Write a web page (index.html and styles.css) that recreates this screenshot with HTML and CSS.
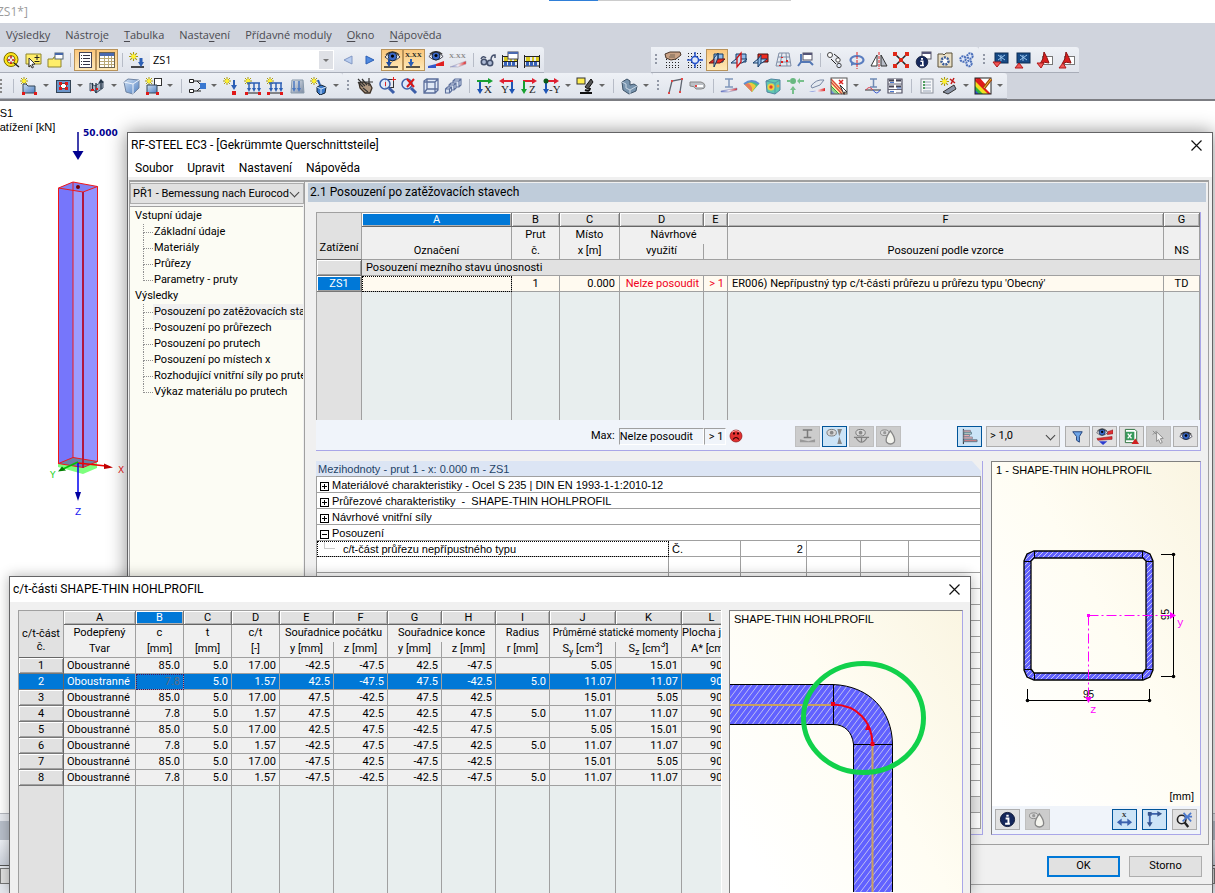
FILE: index.html
```html
<!DOCTYPE html>
<html lang="cs">
<head>
<meta charset="utf-8">
<title>RF-STEEL EC3</title>
<link rel="stylesheet" href="styles.css">
</head>
<body>
<svg class="paints" aria-hidden="true">
  <defs>
    <linearGradient id="gBlue" x1="0" y1="0" x2="1" y2="1"><stop offset="0" stop-color="#cfe0f4"/><stop offset="1" stop-color="#4f7fc0"/></linearGradient>
    <linearGradient id="gGrey" x1="0" y1="0" x2="1" y2="1"><stop offset="0" stop-color="#e4e9f0"/><stop offset="1" stop-color="#7d8ca4"/></linearGradient>
    <linearGradient id="gRB" x1="0" y1="0" x2="1" y2="0"><stop offset="0" stop-color="#4a6ad0"/><stop offset=".5" stop-color="#f4f0f6"/><stop offset="1" stop-color="#e02020"/></linearGradient>
    <pattern id="hatch" width="5" height="5" patternUnits="userSpaceOnUse"><rect width="5" height="5" fill="#6161ff"/><path d="M-1 6L6-1M-1 1L1-1M4 6L6 4" stroke="#c9c9ee" stroke-width="1"/></pattern>
    <pattern id="hatchWide" width="6" height="8" patternUnits="userSpaceOnUse"><rect width="6" height="8" fill="#6161ff"/><path d="M-1 9.300L7-1.300M-1 1.300L1-1.300M5 9.300L7 6.700" stroke="#bdbdf2" stroke-width="1"/></pattern>
  </defs>
</svg>
<svg class="symbols" aria-hidden="true">
  <symbol id="star" viewBox="0 0 8 8"><path d="M4 0v8M0 4h8M1 1l6 6M7 1L1 7" stroke="#a89a10"/><circle cx="4" cy="4" r="2" fill="#fff22e"/></symbol>
  <symbol id="find" viewBox="0 0 18 18"><circle cx="9" cy="8.500" r="7" fill="#ffe61a" stroke="#7a6c00"/><circle cx="9" cy="8.500" r="4" fill="#eceff2" stroke="#7a6c00"/><path d="M9 5v2.500M5.500 9H8M9 13v-2.500M12.500 9H10" stroke="#d01010" stroke-width="1.500"/><path d="M12 12l5 4" stroke="#222" stroke-width="1.500"/></symbol>
  <symbol id="pick" viewBox="0 0 18 18"><path d="M2 3h15v10H9l-4 3V13H2z" fill="#ffee6a" stroke="#8d8430"/><path d="M13 4v5M10.500 6.500h5M10.500 10.500h5" stroke="#222"/><path d="M5 7l6 6-3 .3 1.500 3-1.500.7-1.400-3L5 16z" fill="#fff" stroke="#333"/></symbol>
  <symbol id="tabs" viewBox="0 0 18 18"><path d="M2 8h5l1-2h7v10H2z" fill="#ffee6a" stroke="#8d8430"/><rect x="9" y="2" width="8" height="6" fill="#fff" stroke="#567"/><path d="M9 3h8" stroke="#4466a8" stroke-width="2"/></symbol>
  <symbol id="list" viewBox="0 0 18 18"><rect x="3.500" y="1.500" width="12" height="15" fill="#fff" stroke="#445"/><path d="M7 4.500h7M7 7.500h7M7 10.500h7M7 13.500h7" stroke="#334"/><path d="M5.500 4v10" stroke="#333" stroke-dasharray="1 2"/></symbol>
  <symbol id="table" viewBox="0 0 18 18"><rect x="1.500" y="1.500" width="15" height="15" fill="#fff" stroke="#6b624e"/><rect x="2" y="2" width="14" height="3" fill="#4a69b0"/><path d="M2 7.500h14M2 10.500h14M2 13.500h14M6.500 5v11M10.500 5v11M13.500 5v11" stroke="#b9a878"/></symbol>
  <symbol id="newload" viewBox="0 0 18 18"><use href="#star" x="1" y="1" width="9" height="9"/><path d="M3 16h13" stroke="#111" stroke-width="1.500"/><path d="M13 7v6" stroke="#2c5fb5" stroke-width="3"/><path d="M10 11h6l-3 5z" fill="#2c5fb5"/></symbol>
  <symbol id="prev" viewBox="0 0 18 18"><path d="M13 5v8L5 9z" fill="#b8cdf0" stroke="#8298c4"/></symbol>
  <symbol id="next" viewBox="0 0 18 18"><path d="M5 5v8l8-4z" fill="#4f8ae0" stroke="#2c5fb5"/></symbol>
  <symbol id="eye" viewBox="0 0 18 18"><path d="M1 9.500q8-9 16 0q-8 8-16 0z" fill="#fff" stroke="#334"/><circle cx="9" cy="9" r="4.500" fill="#3a68c8" stroke="#123"/><circle cx="9" cy="8.500" r="1.700" fill="#000"/><path d="M2 7q7-6 14 0" fill="none" stroke="#333" stroke-width="1.300"/></symbol>
  <symbol id="eyeload" viewBox="0 0 18 18"><use href="#eye" x="1" y="-3" width="17" height="17"/><path d="M1 16h14" stroke="#222" stroke-width="1.500"/><path d="M6 8v5" stroke="#1f4da0" stroke-width="2"/><path d="M3 11h6l-3 5z" fill="#1f4da0"/></symbol>
  <symbol id="xxx" viewBox="0 0 18 18"><text x="0" y="6" class="tiny">X.XX</text><path d="M1 16h14" stroke="#222" stroke-width="1.500"/><path d="M6 8v5" stroke="#2c5fb5" stroke-width="2"/><path d="M3 11h6l-3 5z" fill="#2c5fb5"/></symbol>
  <symbol id="eyerb" viewBox="0 0 18 18"><use href="#eye" x="1" y="-3" width="16" height="16"/><path d="M1 17v-2l8-2v4z" fill="#3458c8"/><path d="M9 13l8-3v5H9z" fill="#e02020"/></symbol>
  <symbol id="xxrb" viewBox="0 0 18 18"><text x="0" y="7" class="tiny pale">X.XX</text><path d="M1 16l16-6v3l-8 3z" fill="url(#gRB)" stroke="#b0a8b8" stroke-width=".6"/></symbol>
  <symbol id="glasses" viewBox="0 0 18 18"><circle cx="5" cy="11" r="2.700" fill="#aebbd6" stroke="#44506c" stroke-width="1.600"/><circle cx="11" cy="12" r="2.700" fill="#aebbd6" stroke="#44506c" stroke-width="1.600"/><path d="M2 8q2-4 5-1M12 9q0-5 4-5v3" fill="none" stroke="#44506c" stroke-width="1.500"/></symbol>
  <symbol id="abacus" viewBox="0 0 18 18"><path d="M1.500 4v13M16.500 4v13M1 5.500h16M1 10.500h16M1 15h16" stroke="#222"/><path d="M3 8h4M9 8h2M13 8h3" stroke="#d8ca20" stroke-width="4"/><path d="M3 13h12" stroke="#3560b8" stroke-width="4" stroke-dasharray="3 1"/></symbol>
  <symbol id="abacusw" viewBox="0 0 18 18"><use href="#abacus" width="18" height="18"/><rect x="7" y="1" width="10" height="7" fill="#fff" stroke="#445"/><path d="M7 2h10" stroke="#4a69b0" stroke-width="2"/></symbol>
  <symbol id="handgrid" viewBox="0 0 18 18"><path d="M2 8.500h15M2 11.500h15M2 14.500h15M2 16.500h15" stroke="#222" stroke-dasharray="1 2"/><path d="M1 3l5-2 10 0 1 3-5 4-5 1-5-2z" fill="#c9a184" stroke="#4b372b"/><path d="M6 4l5 0M5 6l6 0" stroke="#765"/></symbol>
  <symbol id="gridx" viewBox="0 0 18 18"><path d="M2 2.500h15M2 5.500h15M2 8.500h15M2 11.500h15M2 14.500h15M2 16.500h15" stroke="#222" stroke-dasharray="1 2"/><path d="M9 1v16M1 9h16" stroke="#2350c8" stroke-width="1.500"/><circle cx="9" cy="9" r="3.500" fill="#dfe9fb" stroke="#2350c8" stroke-width="1.500"/></symbol>
  <symbol id="plane1" viewBox="0 0 18 18"><path d="M6 3h9v8H6z" fill="#8fbbe8" stroke="#153a66"/><path d="M1 12l5-4h11l-5 4z" fill="#ee2c20" stroke="#611"/><path d="M6 7l4-5v5l-4 9z" fill="#b8d5f2" fill-opacity=".8" stroke="#153a66"/><path d="M10 2v6" stroke="#153a66"/></symbol>
  <symbol id="plane2" viewBox="0 0 18 18"><path d="M6 3h10v8H6z" fill="#8fbbe8" stroke="#153a66"/><path d="M1 12l5-4h11l-5 4z" fill="#b8d5f2" stroke="#153a66"/><path d="M7 7l4-5v9l-4 5z" fill="#cfe2f6" stroke="#c11" stroke-width="1.300"/></symbol>
  <symbol id="plane3" viewBox="0 0 18 18"><path d="M6 3h10v8H6z" fill="#ee2c20" stroke="#411"/><path d="M1 12l5-4h9l-5 4z" fill="#b8d5f2" stroke="#153a66"/><path d="M6 8l3-4v8l-3 4z" fill="#8fbbe8" stroke="#153a66"/></symbol>
  <symbol id="mesh" viewBox="0 0 18 18"><path d="M5 2h10l2 13H2zM8 2L6 15M12 2l1 13M4 6h12M3 11h13" fill="none" stroke="#7f8da5"/><path d="M8 6v1M8 10v2M13 9v2M6 14v1" stroke="#d22" stroke-width="2"/></symbol>
  <symbol id="axisw" viewBox="0 0 18 18"><rect x="7" y="2" width="9" height="7" fill="#fff" stroke="#556"/><path d="M7 3h9" stroke="#557" stroke-width="2"/><path d="M5 3v8l-3 4M5 11h9l3 3" fill="none" stroke="#5377b5" stroke-width="2"/></symbol>
  <symbol id="copyc" viewBox="0 0 18 18"><circle cx="4" cy="4" r="2.500" fill="#fff" stroke="#444"/><circle cx="12" cy="9" r="2.200" fill="#fff" stroke="#444"/><circle cx="13" cy="14.500" r="2.200" fill="#dde6f6" stroke="#444"/><path d="M5 8l5 5M8 3l5 4" stroke="#222"/></symbol>
  <symbol id="rotate" viewBox="0 0 18 18"><ellipse cx="9" cy="9" rx="6.500" ry="4" fill="none" stroke="#5b7ec0" stroke-width="2.200"/><path d="M9 1v17" stroke="#e02020" stroke-dasharray="3 1"/><path d="M3 10l0 5 4-2z" fill="#5b7ec0"/></symbol>
  <symbol id="mirror" viewBox="0 0 18 18"><path d="M7 4v11H1z" fill="#fff" stroke="#333"/><path d="M11 4v11h6z" fill="#b8bdc8" stroke="#333"/><path d="M9 1v17" stroke="#e02020" stroke-dasharray="3 1"/></symbol>
  <symbol id="cross" viewBox="0 0 18 18"><path d="M3 3l12 12M15 3L3 15" stroke="#222" stroke-width="1.500"/><path d="M1 1h4v4H1zM13 1h4v4h-4zM1 13h4v4H1zM13 13h4v4h-4zM7 7h4v4H7z" fill="#e02818"/></symbol>
  <symbol id="info" viewBox="0 0 18 18"><circle cx="9" cy="9" r="7.500" fill="#16285c" stroke="#0b1433"/><path d="M9 4v2" stroke="#fff" stroke-width="2.500"/><path d="M7 8h3v5M6.500 13.500h5" stroke="#fff" stroke-width="2" fill="none"/></symbol>
  <symbol id="infow" viewBox="0 0 18 18"><rect x="8" y="1" width="9" height="7" fill="#fff" stroke="#556"/><path d="M8 2h9" stroke="#557" stroke-width="2"/><use href="#info" x="1" y="4" width="14" height="14"/></symbol>
  <symbol id="boxgear" viewBox="0 0 18 18"><path d="M2 3h5l1 1 2-2h6v14H2z" fill="#e9dfc6" stroke="#5a5038"/><circle cx="9" cy="10" r="3.500" fill="#fff" stroke="#3b5c98" stroke-width="2.500" stroke-dasharray="2 1"/></symbol>
  <symbol id="gears" viewBox="0 0 18 18"><g fill="#dfe8fa" stroke="#4b6fba" stroke-width="2" stroke-dasharray="2 .7"><circle cx="5" cy="8" r="2.700"/><circle cx="12" cy="5" r="2.700"/><circle cx="11" cy="12.500" r="2.700"/></g></symbol>
  <symbol id="imgb" viewBox="0 0 18 18"><rect x="3" y="2" width="13" height="10" fill="#164a86" stroke="#0d2d55"/><path d="M6 4l7 5M13 4L6 9M9 4v6" stroke="#9cc6ee"/></symbol>
  <symbol id="imgdown" viewBox="0 0 18 18"><use href="#imgb" width="18" height="18"/><path d="M1 11h8l-4 5z" fill="#f05858" stroke="#b01818"/></symbol>
  <symbol id="imgup" viewBox="0 0 18 18"><use href="#imgb" width="18" height="18"/><path d="M1 17h8l-4-5z" fill="#f05858" stroke="#b01818"/></symbol>
  <symbol id="pdfdown" viewBox="0 0 18 18"><rect x="6.500" y="5.500" width="10" height="8" fill="#fff" stroke="#777"/><path d="M8 1q3 5 5 11-5-2-9 1 4-5 4-12z" fill="#d81e1e" stroke="#8a1010"/><path d="M1 12h7l-3 5z" fill="#f05858" stroke="#b01818"/></symbol>
  <symbol id="pdfup" viewBox="0 0 18 18"><rect x="6.500" y="5.500" width="10" height="8" fill="#fff" stroke="#777"/><path d="M8 1q3 5 5 11-5-2-9 1 4-5 4-12z" fill="#d81e1e" stroke="#8a1010"/><path d="M1 17h7l-3-5z" fill="#f05858" stroke="#b01818"/></symbol>
  <symbol id="nsurf" viewBox="0 0 18 18"><use href="#star" x="0" y="0" width="8" height="8"/><path d="M3 7h3l2 2h7v7H3z" fill="url(#gBlue)" stroke="#345"/><path d="M2 15h3v3H2zM14 15h3v3h-3z" fill="#e01818"/></symbol>
  <symbol id="open" viewBox="0 0 18 18"><rect x="2.500" y="3.500" width="14" height="12" fill="#6c94c8" stroke="#345"/><rect x="6.500" y="6.500" width="6" height="5" fill="#fff" stroke="#555"/><path d="M5 5h3v3H5zM11 5h3v3h-3zM5 10h3v3H5zM11 10h3v3h-3z" fill="#e01818"/></symbol>
  <symbol id="inter" viewBox="0 0 18 18"><path d="M2 6l5 3 8-5v7l-7 5-2-3-4 1z" fill="url(#gGrey)" stroke="#456"/><path d="M8 6v10M4.500 6v8M13 4v8M11 6l2-3 2 3" fill="none" stroke="#234" stroke-width="1.300"/><path d="M3 12h3v2H3zM8 11h2v2H8z" fill="#e01818"/></symbol>
  <symbol id="solid" viewBox="0 0 18 18"><path d="M2 5l4-3 11 1v8l-6 6-7-2z" fill="url(#gBlue)" stroke="#7085a4"/><path d="M2 5l9 2v10M11 7l6-4" fill="none" stroke="#eef4fc"/></symbol>
  <symbol id="nsolid" viewBox="0 0 18 18"><rect x="10.500" y="1.500" width="7" height="7" fill="#fff" stroke="#333"/><use href="#star" x="1" y="0" width="8" height="8"/><path d="M3 8h10v8H3z" fill="url(#gBlue)" stroke="#345"/><path d="M2 15h3v3H2zM12 15h3v3h-3z" fill="#e01818"/></symbol>
  <symbol id="branch" viewBox="0 0 18 18"><path d="M1.500 2.500h4v3h-4zM1.500 12.500h4v3h-4z" fill="#fff" stroke="#222"/><path d="M6 4h3l4 4M6 14h3l4-4M9 4l4 0M9 14h4" fill="none" stroke="#222"/><rect x="12" y="6" width="6" height="6" fill="#3a78d0"/></symbol>
  <symbol id="nload" viewBox="0 0 18 18"><use href="#star" x="1" y="0" width="8" height="8"/><path d="M12 3v7" stroke="#2c5fb5" stroke-width="2"/><path d="M9 8h6l-3 5z" fill="#2c5fb5"/><path d="M10 14h4v4h-4z" fill="#e01818"/></symbol>
  <symbol id="mload" viewBox="0 0 18 18"><use href="#star" x="0" y="0" width="8" height="8"/><path d="M3 6h13M5 6v7M10 6v7M15 6v7" stroke="#2c5fb5" stroke-width="1.500"/><path d="M3 11h4l-2 4zM8 11h4l-2 4zM13 11h4l-2 4z" fill="#2c5fb5"/><path d="M2 16h14" stroke="#222"/><path d="M1 15h3v3H1zM14 15h3v3h-3z" fill="#e01818"/></symbol>
  <symbol id="sload" viewBox="0 0 18 18"><path d="M4 3h11l1 13H3z" fill="url(#gGrey)" stroke="#89a"/><path d="M6 4v8M11 4v8" stroke="#4b78c0" stroke-width="1.500"/><path d="M4 11h4l-2 4zM9 11h4l-2 4z" fill="#4b78c0"/></symbol>
  <symbol id="gload" viewBox="0 0 18 18"><use href="#star" x="0" y="0" width="8" height="8"/><path d="M8 3l2 5" stroke="#2c5fb5" stroke-width="2"/><path d="M7 10l4-2 5 2-1 6-5 2-3-3z" fill="#3a78c8" stroke="#123"/><path d="M7 10l4 2 5-2M11 12v5" fill="none" stroke="#cfe2f8"/></symbol>
  <symbol id="hand" viewBox="0 0 18 18"><path d="M3 6l4-1 7 2 2 4-2 5-5 0-5-5z" fill="#b09880" stroke="#3c3026" stroke-width="1.300"/><path d="M2 2l7 7M6 2l5 6M2 5l5 5M13 1v8M9 5h8M7 11l5 4" stroke="#333" stroke-width="1.200"/></symbol>
  <symbol id="zoomw" viewBox="0 0 18 18"><rect x="7.500" y="2.500" width="8" height="8" fill="none" stroke="#333"/><circle cx="7" cy="7" r="5" fill="#dbe8fb" fill-opacity=".8" stroke="#3c5ea8" stroke-width="1.500"/><path d="M11 11l5 5" stroke="#3c5ea8" stroke-width="3"/><path d="M15.500 0v4M14 2.500h4M7.500 5v4" stroke="#d22"/></symbol>
  <symbol id="zoomx" viewBox="0 0 18 18"><circle cx="7" cy="7" r="5" fill="#dbe8fb" stroke="#3c5ea8" stroke-width="1.500"/><path d="M11 11l5 5" stroke="#3c5ea8" stroke-width="3"/><path d="M7 2l7 8M14 2L7 10" stroke="#d81818" stroke-width="2"/></symbol>
  <symbol id="cube" viewBox="0 0 18 18"><path d="M2 4l3-2h11v11l-3 3H2zM2 5h11v11M13 5l3-3M5 2v10h11M5 12l-3 4" fill="#dfe8f6" stroke="#5c6f9c" stroke-width="1.300"/></symbol>
  <symbol id="cubes" viewBox="0 0 18 18"><g fill="#d9e3f3" stroke="#5c6f9c" stroke-width="1.100"><path d="M9 4l2-2h6v6l-2 2H9zM9 4h6v6M15 4l2-2"/><path d="M5 8l2-2h5v5l-2 2H5zM5 8h5v5M10 8l2-2"/><path d="M1.500 12l2-2h4v4l-2 2h-4zM1.500 12h4v4M5.500 12l2-2"/></g></symbol>
  <symbol id="axX" viewBox="0 0 18 18"><path d="M1 4h13" stroke="#18a030" stroke-width="2"/><path d="M12 1l5 3-5 3z" fill="#18a030"/><path d="M4 5v9" stroke="#1f55b5" stroke-width="2"/><path d="M1 12h6l-3 5z" fill="#1f55b5"/><text x="8" y="16" class="ax">X</text></symbol>
  <symbol id="axY" viewBox="0 0 18 18"><path d="M4 4h11" stroke="#e02030" stroke-width="2"/><path d="M6 1L1 4l5 3z" fill="#e02030"/><path d="M14 5v9" stroke="#1f55b5" stroke-width="2"/><path d="M11 12h6l-3 5z" fill="#1f55b5"/><text x="3" y="16" class="ax">Y</text></symbol>
  <symbol id="axZ" viewBox="0 0 18 18"><path d="M3 4h11" stroke="#e02030" stroke-width="2"/><path d="M12 1l5 3-5 3z" fill="#e02030"/><path d="M4 4v10" stroke="#18a030" stroke-width="2"/><path d="M1 12h6l-3 5z" fill="#18a030"/><text x="9" y="16" class="ax">Z</text></symbol>
  <symbol id="axmY" viewBox="0 0 18 18"><path d="M4 4h10" stroke="#e02030" stroke-width="2"/><path d="M12 1l5 3-5 3z" fill="#e02030"/><path d="M4 4v10" stroke="#1f55b5" stroke-width="2"/><path d="M1 12h6l-3 5z" fill="#1f55b5"/><circle cx="4" cy="4" r="2.500" fill="#0a5a18"/><text x="7" y="16" class="ax">-Y</text></symbol>
  <symbol id="micro" viewBox="0 0 18 18"><rect x="1" y="1" width="8" height="6" fill="#ffee50" stroke="#333"/><path d="M15 2l-6 8 3 2 5-7z" fill="#555" stroke="#111"/><path d="M4 16h12M9 13q5 2 5-2" stroke="#111" stroke-width="2" fill="none"/></symbol>
  <symbol id="iso" viewBox="0 0 18 18"><path d="M2 5l5-3 3 2v4l4-1 3 2-1 5-7 3-6-4z" fill="#7894ae" stroke="#3e5368"/><path d="M2 5l4 2v4l4 2 7-4M10 13v4" fill="none" stroke="#c8d6e4"/></symbol>
  <symbol id="frame" viewBox="0 0 18 18"><path d="M3 16L6 4l10-2-2 13" fill="none" stroke="#5f6570" stroke-width="1.300"/><path d="M5 3h2v2H5zM15 1h2v2h-2zM2 15h2v2H2zM13 14h2v2h-2z" fill="#e04848"/></symbol>
  <symbol id="hinge" viewBox="0 0 18 18"><path d="M2 5h11q4 1 4 4t-4 3H8q-1-3-6-3z" fill="#bcc0c6" stroke="#888"/><path d="M7 9h8" stroke="#fff" stroke-width="2"/><path d="M7 9h2" stroke="#e04848" stroke-width="2"/></symbol>
  <symbol id="irb" viewBox="0 0 18 18"><path d="M5 2h8M9 2v8M5 10h8" stroke="#7f96bb" stroke-width="1.500"/><path d="M1 14l16-3v2L8 15H1z" fill="url(#gRB)" stroke="#8080b0" stroke-width=".5"/></symbol>
  <symbol id="surfc" viewBox="0 0 18 18"><path d="M2 7q8-6 15 0l-7 8z" fill="#4fc07c"/><path d="M2 7q7-4 12 2l-4 6z" fill="#f0c83c"/><path d="M2 7q5-3 8 4l0 4z" fill="#e87a60"/><path d="M2 7q8-6 15 0" fill="none" stroke="#5f90d0" stroke-width="2"/></symbol>
  <symbol id="solidc" viewBox="0 0 18 18"><path d="M2 4l5-2 9 1v10l-5 4-8-2z" fill="#60c8b0" stroke="#5085a0"/><path d="M2 4l9 2v11M11 6l5-3" fill="none" stroke="#5085a0" stroke-width=".7"/><circle cx="7" cy="10" r="3.500" fill="#f0d040"/><circle cx="7" cy="10" r="1.700" fill="#e04030"/><circle cx="14" cy="9" r="1.500" fill="#f0a040"/></symbol>
  <symbol id="support" viewBox="0 0 18 18"><circle cx="7" cy="4" r="3" fill="#68b880"/><path d="M7 10v7M12 4h6M1 4h4" stroke="#78c08c" stroke-width="2"/><path d="M4 13l3-4 3 4zM14 1l-3 3 3 3z" fill="#78c08c"/></symbol>
  <symbol id="membrane" viewBox="0 0 18 18"><path d="M3 9q5-7 13-6l-4 5-8 3z" fill="#e4e9f0" stroke="#7988a4"/><path d="M1 15l16-4v3l-8 1z" fill="url(#gRB)"/></symbol>
  <symbol id="rainx" viewBox="0 0 18 18"><path d="M1 1h16v16H1z" fill="#fff"/><path d="M1 1l16 16H1z" fill="#fbf6a0"/><path d="M1 9l8 8H1z" fill="#8fd08f"/><path d="M1 13l4 4H1z" fill="#7088e8"/><path d="M1 2l14 15M1 5l11 12" stroke="#e04040" stroke-width="1.200"/><path d="M1 9l8 8" stroke="#30a040"/><rect x="1" y="1" width="16" height="16" fill="none" stroke="#555"/><path d="M9 3l4 4M13 3L9 7" stroke="#d22" stroke-width="1.500"/><path d="M10 8l7 7-3 .3 0 2z" fill="#fff" stroke="#333"/></symbol>
  <symbol id="wave" viewBox="0 0 18 18"><path d="M6 2h7M9.500 2v8M6 10h7" stroke="#6f8ab5" stroke-width="1.500"/><path d="M1 13h16" stroke="#333"/><path d="M2 13q3-5 7 0" fill="none" stroke="#e04050"/><path d="M9 13q4 6 7 0" fill="none" stroke="#4060d0"/></symbol>
  <symbol id="grids" viewBox="0 0 18 18"><path d="M2 2h14v14H2z" fill="#f4f6fb" stroke="#556" stroke-width="1.200"/><path d="M3 3.500h12M3 9.500h12" stroke="#445" stroke-width="2"/><path d="M9 2v14" stroke="#fff" stroke-width="2"/><path d="M2 7h14M2 12.500h14" stroke="#667"/><path d="M4 5.500h4M11 11h4M4 14.500h4" stroke="#4a78d0"/></symbol>
  <symbol id="report" viewBox="0 0 18 18"><rect x="3" y="2" width="12" height="14" fill="#f6f7f9" stroke="#8b919c"/><path d="M5 5h8M5 8h8M5 11h8M5 14h8" stroke="#9aa6b8"/><path d="M5 5h2M5 8h2M5 11h2" stroke="#50a060" stroke-width="2"/></symbol>
  <symbol id="nfilter" viewBox="0 0 18 18"><use href="#star" x="0" y="0" width="9" height="9"/><path d="M10 2l5 4M14 1l-3 6" stroke="#c01818" stroke-width="1.500"/><path d="M3 15l11-7 2 4-8 5z" fill="#8a94a6" stroke="#333"/></symbol>
  <symbol id="rainpen" viewBox="0 0 18 18"><path d="M1 1h16v16H1z" fill="#fff"/><path d="M1 1l16 16H1z" fill="#e01c1c"/><path d="M1 1h5l6 7-3 3z" fill="#e01c1c"/><path d="M1 4l13 13H1z" fill="#f0e020"/><path d="M1 9l8 8H1z" fill="#30b040"/><path d="M1 13l4 4H1z" fill="#3050d8"/><rect x="1" y="1" width="16" height="16" fill="none" stroke="#222"/><path d="M10 11l7-9" stroke="#a04810" stroke-width="3"/><path d="M10 11l7-9" stroke="#f0c030"/></symbol>
  <symbol id="funnel" viewBox="0 0 18 18"><path d="M4 4h10l-3 5v6l-3-2V9z" fill="#6fa6e8" stroke="#1d3e78"/></symbol>
  <symbol id="eyeflag" viewBox="0 0 18 18"><path d="M12 4l6-2v4l-6 1zM1 11l16-2v3L2 13z" fill="#e03030" stroke="#812" stroke-width=".6"/><use href="#eye" x="0" y="-2" width="13" height="13"/><path d="M3 14h9l-4.500 4z" fill="#2d3fd0"/></symbol>
  <symbol id="excel" viewBox="0 0 18 18"><path d="M2.500 1.500h10l2 2v12h-12z" fill="#fff" stroke="#2b6e3a"/><path d="M3 4h9v9H3z" fill="#37995a"/><path d="M5 6l4 5M9 6l-4 5" stroke="#fff" stroke-width="1.500"/><path d="M9 17h8l-4-6z" fill="#d02020"/></symbol>
  <symbol id="cursor" viewBox="0 0 18 18"><path d="M3 3l4 4M3 7l4-4" stroke="#888"/><path d="M7 4l7 7-3 .3 2 4-2 1-2-4-2 2z" fill="#f4f4f4" stroke="#888"/></symbol>
  <symbol id="bars" viewBox="0 0 18 18"><path d="M2.500 1v16" stroke="#222"/><path d="M3 2.500h7v2H3zM3 7h6v2H3z" fill="#f6b0b0" stroke="#889"/><path d="M3 4.500h8v2H3z" fill="#d8ecde" stroke="#578"/><path d="M3 9.500h9v2H3z" fill="#f6b0b0" stroke="#889"/><path d="M3 12.500h14v2H3z" fill="#f08080" stroke="#578"/></symbol>
  <symbol id="gsec" viewBox="0 0 18 18"><path d="M4 2h10M9 2v8M5 10h8" stroke="#7a7a7a" stroke-width="1.600"/><path d="M1 15V12l9 2 7-2v3z" fill="#999"/></symbol>
  <symbol id="geye" viewBox="0 0 18 18"><ellipse cx="6" cy="5" rx="5" ry="3.500" fill="#d8d8d8" stroke="#777"/><circle cx="6" cy="5" r="2" fill="#888"/><path d="M12 1h5l-3 8zM12 17h5l-3-8z" fill="#888"/></symbol>
  <symbol id="garc" viewBox="0 0 18 18"><ellipse cx="8" cy="5" rx="5" ry="3.500" fill="#d8d8d8" stroke="#777"/><circle cx="8" cy="5" r="2" fill="#888"/><path d="M1 10h16M3 10q6 10 12 0M9 10v5" fill="none" stroke="#808080" stroke-width="1.300"/></symbol>
  <symbol id="gdrop" viewBox="0 0 18 18"><ellipse cx="5" cy="5" rx="4.500" ry="3" fill="#d8d8d8" stroke="#888"/><circle cx="5" cy="5" r="1.700" fill="#999"/><path d="M11 3q6 8 4 12-4 4-8 0-2-4 4-12z" fill="#f4f4ee" stroke="#868686" stroke-width="1.400"/></symbol>
  <symbol id="dimx" viewBox="0 0 18 18"><text x="6" y="6" class="tiny">X</text><path d="M4 12h10" stroke="#3c62ae" stroke-width="2"/><path d="M6 8v8l-5-4zM12 8v8l5-4z" fill="#3c62ae"/></symbol>
  <symbol id="axes" viewBox="0 0 18 18"><path d="M2 3h12M4 3v11" stroke="#3c62ae" stroke-width="2"/><path d="M12 0l5 3-5 3zM1 12h6l-3 5zM2 1h4v4H2z" fill="#35558f"/></symbol>
  <symbol id="zoomall" viewBox="0 0 18 18"><circle cx="6" cy="9" r="4.500" fill="#eee" stroke="#222" stroke-width="1.700"/><path d="M9 12l4 5" stroke="#222" stroke-width="2.500"/><path d="M8 2l8 9M16 2L7 11M9 6h8" stroke="#4a78cc" stroke-width="1.700"/></symbol>
  <symbol id="sad" viewBox="0 0 14 14"><circle cx="7" cy="7" r="6" fill="#e23030" stroke="#8a1010" stroke-width=".7"/><path d="M4 4.500h2M8 4.500h2" stroke="#300" stroke-width="2"/><path d="M4 10.500q3-4 6 0" fill="none" stroke="#300" stroke-width="1.200"/><path d="M3 3q4-3 8 0" stroke="#f8a0a0" fill="none"/></symbol>
  <symbol id="close" viewBox="0 0 11 11"><path d="M.5.5l10 10M10.500.5L.5 10.500" stroke="#111" stroke-width="1.200"/></symbol>
</svg>

<div class="app">
  <header class="apptitle"><i class="progress"></i><span>ZS1*]</span></header>
  <nav class="menubar">
    <a href="#">Výsled<u>k</u>y</a><a href="#">Nástro<u>j</u>e</a><a href="#"><u>T</u>abulka</a><a href="#">Nasta<u>v</u>ení</a><a href="#">Pří<u>d</u>avné moduly</a><a href="#"><u>O</u>kno</a><a href="#"><u>N</u>ápověda</a>
  </nav>
  <div class="toolrow">
    <div class="band">
      <button class="tb"><svg><use href="#find"/></svg></button><button class="tb"><svg><use href="#pick"/></svg></button><button class="tb"><svg><use href="#tabs"/></svg></button><i class="sep"></i>
      <button class="tb on"><svg><use href="#list"/></svg></button><button class="tb on"><svg><use href="#table"/></svg></button><i class="sep"></i>
      <button class="tb"><svg><use href="#newload"/></svg></button>
      <span class="loadcase"><select aria-label="Zatěžovací stav"><option>ZS1</option></select></span>
      <button class="tb"><svg><use href="#prev"/></svg></button><button class="tb"><svg><use href="#next"/></svg></button><button class="tb on"><svg><use href="#eyeload"/></svg></button><button class="tb on"><svg><use href="#xxx"/></svg></button><button class="tb"><svg><use href="#eyerb"/></svg></button><button class="tb"><svg><use href="#xxrb"/></svg></button><i class="sep"></i>
      <button class="tb"><svg><use href="#glasses"/></svg></button><button class="tb"><svg><use href="#abacusw"/></svg></button><button class="tb"><svg><use href="#abacus"/></svg></button>
    </div>
    <div class="band far"><i class="grip"></i>
      <button class="tb"><svg><use href="#handgrid"/></svg></button><button class="tb"><svg><use href="#gridx"/></svg></button><button class="tb on"><svg><use href="#plane1"/></svg></button><button class="tb"><svg><use href="#plane2"/></svg></button><button class="tb"><svg><use href="#plane3"/></svg></button><button class="tb"><svg><use href="#mesh"/></svg></button><button class="tb"><svg><use href="#axisw"/></svg></button><i class="sep"></i>
      <button class="tb"><svg><use href="#copyc"/></svg></button><button class="tb"><svg><use href="#rotate"/></svg></button><button class="tb"><svg><use href="#mirror"/></svg></button><button class="tb"><svg><use href="#cross"/></svg></button><button class="tb"><svg><use href="#infow"/></svg></button><button class="tb"><svg><use href="#boxgear"/></svg></button><button class="tb"><svg><use href="#gears"/></svg></button>
    </div>
    <div class="band"><i class="grip"></i>
      <button class="tb"><svg><use href="#imgdown"/></svg></button><button class="tb"><svg><use href="#imgup"/></svg></button><button class="tb"><svg><use href="#pdfdown"/></svg></button><button class="tb"><svg><use href="#pdfup"/></svg></button>
    </div>
  </div>
  <div class="toolrow second">
    <div class="band"><i class="edge"></i><i class="sep"></i>
      <button class="tb"><svg><use href="#nsurf"/></svg></button><button class="dd"></button><button class="tb"><svg><use href="#open"/></svg></button><button class="dd"></button><button class="tb"><svg><use href="#inter"/></svg></button><button class="dd"></button><button class="tb"><svg><use href="#solid"/></svg></button><button class="tb"><svg><use href="#nsolid"/></svg></button><button class="dd"></button><i class="sep"></i>
      <button class="tb"><svg><use href="#branch"/></svg></button><button class="dd"></button><button class="tb"><svg><use href="#nload"/></svg></button><button class="tb"><svg><use href="#mload"/></svg></button><button class="tb"><svg><use href="#mload"/></svg></button><button class="tb"><svg><use href="#sload"/></svg></button><button class="tb"><svg><use href="#gload"/></svg></button><button class="dd"></button>
    </div>
    <div class="band"><i class="grip"></i>
      <button class="tb"><svg><use href="#hand"/></svg></button><button class="tb"><svg><use href="#zoomw"/></svg></button><button class="tb"><svg><use href="#zoomx"/></svg></button><button class="tb"><svg><use href="#cube"/></svg></button><button class="tb"><svg><use href="#cubes"/></svg></button><i class="sep"></i>
      <button class="tb"><svg><use href="#axX"/></svg></button><button class="tb"><svg><use href="#axY"/></svg></button><button class="tb"><svg><use href="#axZ"/></svg></button><button class="tb"><svg><use href="#axmY"/></svg></button><button class="dd"></button><button class="tb"><svg><use href="#micro"/></svg></button><button class="dd"></button><i class="sep"></i>
      <button class="tb"><svg><use href="#iso"/></svg></button><button class="dd"></button>
    </div>
    <div class="band"><i class="grip"></i>
      <button class="tb"><svg><use href="#frame"/></svg></button><button class="tb"><svg><use href="#hinge"/></svg></button><i class="sep"></i>
      <button class="tb"><svg><use href="#irb"/></svg></button><button class="tb"><svg><use href="#surfc"/></svg></button><button class="tb"><svg><use href="#solidc"/></svg></button><button class="tb"><svg><use href="#support"/></svg></button><button class="tb"><svg><use href="#membrane"/></svg></button><button class="tb"><svg><use href="#rainx"/></svg></button><button class="dd"></button><button class="tb"><svg><use href="#wave"/></svg></button><button class="tb"><svg><use href="#grids"/></svg></button><i class="sep"></i>
      <button class="tb"><svg><use href="#report"/></svg></button><button class="tb"><svg><use href="#nfilter"/></svg></button><button class="dd"></button><button class="tb"><svg><use href="#rainpen"/></svg></button><button class="dd"></button>
    </div>
  </div>

  <main class="workspace">
    <p class="caption"><span>ZS1</span><span>Zatížení [kN]</span></p>
    <svg class="model" viewBox="0 131 127 400">
      <path d="M58 464l15-7 24 4v7l-14 6-25-7z" fill="#7dff7d"/>
      <path d="M58.500 188L73 182V458l-14.500 5.500z" fill="#7676fb"/>
      <path d="M58.500 188L83 192V467.500l-24.500-4z" fill="#7676fb"/>
      <path d="M73 190l10 2 14.500-6V462L83 467.500 73 464z" fill="#9c9cff"/>
      <path d="M83 192l14.500-5.500V462L83 467.500z" fill="#9393ff"/>
      <path d="M58.500 188L73 182l24.500 4.500L83 192z" fill="#8080f4" stroke="#f01818"/>
      <path d="M58.500 463.500L73 457.500l24.500 4L83 467.500z" fill="#6a7fa8" stroke="#f01818"/>
      <path d="M73 182v276M58.500 188v276M97.500 186.500V462" stroke="#f01818"/>
      <path d="M83 192v276" stroke="#b01840" stroke-width="2"/>
      <circle cx="78" cy="187" r="2" fill="#700000"/>
      <path d="M78 132v20" stroke="#000090" stroke-width="1.500"/><path d="M72.500 151h11l-5.500 9z" fill="#000090"/>
      <path d="M78 463l28 3" stroke="#f00000" stroke-width="1.500"/><path d="M104 463.500l9 4-9 1.500z" fill="#c00000"/>
      <path d="M78 462l-15 7" stroke="#00c000" stroke-width="1.500"/><path d="M58 471.500l4-5 4 4z" fill="#008000"/>
      <path d="M78 463v30" stroke="#0000f0" stroke-width="1.500"/><path d="M75 492h6l-3 9z" fill="#0000a0"/>
      <text x="83" y="136" class="load">50.000</text>
      <text x="118" y="473" class="axl" fill="#f02020">X</text><text x="50" y="478" class="axl" fill="#20d020">Y</text><text x="75" y="515" class="axl" fill="#2020f0">Z</text>
    </svg>
  </main>
  <footer class="dock"><i></i><b></b><em></em></footer>
</div>

<section class="win main">
  <header class="titlebar"><h1>RF-STEEL EC3 - [Gekrümmte Querschnittsteile]</h1><button class="x" aria-label="Zavřít"><svg><use href="#close"/></svg></button></header>
  <nav class="winmenu"><a href="#">Soubor</a><a href="#">Upravit</a><a href="#">Nastavení</a><a href="#">Nápověda</a></nav>
  <div class="panes">
    <aside class="side">
      <span class="pick case"><select aria-label="Případ"><option>PŘ1 - Bemessung nach Eurocod</option></select></span>
      <div class="tree">
        <p>Vstupní údaje</p>
        <ul><li><span>Základní údaje</span></li><li><span>Materiály</span></li><li><span>Průřezy</span></li><li><span>Parametry - pruty</span></li></ul>
        <p>Výsledky</p>
        <ul><li class="cur"><span>Posouzení po zatěžovacích stavech</span></li><li><span>Posouzení po průřezech</span></li><li><span>Posouzení po prutech</span></li><li><span>Posouzení po místech x</span></li><li><span>Rozhodující vnitřní síly po prutech</span></li><li><span>Výkaz materiálu po prutech</span></li></ul>
      </div>
    </aside>
    <div class="content">
      <h2>2.1 Posouzení po zatěžovacích stavech</h2>
      <div class="results">
        <table class="grid">
          <colgroup><col class="w46"><col class="w150"><col class="w48"><col class="w60"><col class="w84"><col class="w24"><col><col class="w36"></colgroup>
          <tr class="letters"><th rowspan="3" class="corner one">Zatížení</th><th class="sel">A</th><th>B</th><th>C</th><th>D</th><th>E</th><th>F</th><th>G</th></tr>
          <tr class="h1"><th></th><th>Prut</th><th>Místo</th><th colspan="2">Návrhové</th><th></th><th></th></tr>
          <tr class="h2"><th>Označení</th><th>č.</th><th>x [m]</th><th>využití</th><th></th><th>Posouzení podle vzorce</th><th>NS</th></tr>
          <tr class="group"><th class="rh"></th><td colspan="7">Posouzení mezního stavu únosnosti</td></tr>
          <tr class="row cream"><th class="rh sel">ZS1</th><td class="focus"></td><td class="c">1</td><td class="r">0.000</td><td class="r red">Nelze posoudit</td><td class="r red tight">&gt; 1</td><td>ER006) Nepřípustný typ c/t-části průřezu u průřezu typu 'Obecný'</td><td class="c">TD</td></tr>
          <tr class="fill"><th></th><td></td><td></td><td></td><td></td><td></td><td></td><td></td></tr>
        </table>
        <div class="resbar">
          <label for="maxv">Max:</label><input id="maxv" class="maxv" value="Nelze posoudit" readonly><input class="maxn" aria-label="Maximum" value="&gt; 1" readonly><svg class="sad"><use href="#sad"/></svg>
          <span class="btns mid"><button class="ib off"><svg><use href="#gsec"/></svg></button><button class="ib act"><svg><use href="#geye"/></svg></button><button class="ib off"><svg><use href="#garc"/></svg></button><button class="ib off"><svg><use href="#gdrop"/></svg></button></span>
          <span class="btns end"><button class="ib act"><svg><use href="#bars"/></svg></button><span class="pick lim"><select aria-label="Mez"><option>&gt; 1,0</option></select></span><button class="ib"><svg><use href="#funnel"/></svg></button><button class="ib"><svg><use href="#eyeflag"/></svg></button><button class="ib"><svg><use href="#excel"/></svg></button><button class="ib off"><svg><use href="#cursor"/></svg></button><button class="ib"><svg class="small"><use href="#eye"/></svg></button></span>
        </div>
      </div>
      <div class="lower">
        <div class="details">
          <h3>Mezihodnoty - prut 1 - x: 0.000 m - ZS1</h3>
          <table class="dt">
            <colgroup><col><col class="w72"><col class="w66"><col class="w54"><col class="w48"><col class="w72"></colgroup>
            <tr><td colspan="6"><button class="pm plus"></button>Materiálové charakteristiky - Ocel S 235 | DIN EN 1993-1-1:2010-12</td></tr>
            <tr><td colspan="6"><button class="pm plus"></button>Průřezové charakteristiky&nbsp; -&nbsp; SHAPE-THIN HOHLPROFIL</td></tr>
            <tr><td colspan="6"><button class="pm plus"></button>Návrhové vnitřní síly</td></tr>
            <tr><td colspan="6"><button class="pm"></button>Posouzení</td></tr>
            <tr><td class="focus leaf">c/t-část průřezu nepřípustného typu</td><td>Č.</td><td class="r">2</td><td></td><td></td><td></td></tr>
            <tr><td></td><td></td><td></td><td></td><td></td><td></td></tr>
            <tr><td></td><td></td><td></td><td></td><td></td><td></td></tr>
            <tr><td colspan="6"></td></tr><tr><td colspan="6"></td></tr><tr><td colspan="6"></td></tr><tr><td colspan="6"></td></tr><tr><td colspan="6"></td></tr><tr><td colspan="6"></td></tr><tr><td colspan="6"></td></tr><tr><td colspan="6"></td></tr><tr><td colspan="6"></td></tr><tr><td colspan="6"></td></tr><tr><td colspan="6"></td></tr><tr><td colspan="6"></td></tr><tr><td colspan="6"></td></tr><tr class="grey"><td colspan="6"></td></tr><tr><td colspan="6"></td></tr>
          </table>
        </div>
        <div class="section">
          <div class="sketch">
            <p>1 - SHAPE-THIN HOHLPROFIL</p>
            <svg viewBox="0 0 208 310">
              <path fill-rule="evenodd" d="M42 73H151L158 76 161 83V192L158 199 151 202H42L35 199 32 192V83L35 76zM42 80L39 83V191L42 195H151L154 191V83L151 80z" fill="url(#hatch)" stroke="#000" stroke-width="1.300"/>
              <path d="M42.500 73v7M150.500 73v7M42.500 195v7M150.500 195v7M32 83.500h7M154 83.500h7M32 191.500h7M154 191.500h7" stroke="#000"/>
              <path d="M169 76.500h12.500M169 198.500h12.500M181.500 76.500v122M35.500 211v11.500M157.500 211v11.500M35.500 222.500h122" stroke="#000"/>
              <g><circle cx="181.500" cy="76.500" r="1.800"/><circle cx="181.500" cy="198.500" r="1.800"/><circle cx="35.500" cy="222.500" r="1.800"/><circle cx="157.500" cy="222.500" r="1.800"/></g>
              <text x="91" y="220" class="dim">95</text><text transform="translate(177 142) rotate(-90)" class="dim">95</text>
              <path d="M96.500 137.500H180M96.500 137.500V218" stroke="#f0f" stroke-dasharray="10 3 2 3"/>
              <path d="M178 134v7l6-3.500zM93 219h7l-3.500 6zM95 136h3v3h-3z" fill="#f0f"/>
              <text x="185" y="148" class="yz">y</text><text x="98" y="235" class="yz">z</text>
            </svg>
            <p class="unit">[mm]</p>
          </div>
          <div class="secbar"><button class="ib"><svg><use href="#info"/></svg></button><button class="ib off"><svg><use href="#gdrop"/></svg></button><button class="ib act first"><svg><use href="#dimx"/></svg></button><button class="ib act"><svg><use href="#axes"/></svg></button><button class="ib"><svg><use href="#zoomall"/></svg></button></div>
        </div>
      </div>
    </div>
  </div>
  <footer class="actions"><button class="btn ok">OK</button><button class="btn">Storno</button></footer>
</section>

<section class="win child">
  <header class="titlebar"><h1>c/t-části SHAPE-THIN HOHLPROFIL</h1><button class="x" aria-label="Zavřít"><svg><use href="#close"/></svg></button></header>
  <div class="childbody">
    <div class="clip">
      <table class="grid parts">
        <colgroup><col class="w46"><col class="w72"><col class="w48"><col class="w48"><col class="w48"><col class="w54"><col class="w54"><col class="w54"><col class="w54"><col class="w54"><col class="w66"><col class="w66"><col class="w60"></colgroup>
        <tr class="letters"><th rowspan="3" class="corner">c/t-část<br>č.</th><th>A</th><th class="sel">B</th><th>C</th><th>D</th><th>E</th><th>F</th><th>G</th><th>H</th><th>I</th><th>J</th><th>K</th><th>L</th></tr>
        <tr class="h1"><th>Podepřený</th><th>c</th><th>t</th><th>c/t</th><th colspan="2">Souřadnice počátku</th><th colspan="2">Souřadnice konce</th><th>Radius</th><th colspan="2" class="long">Průměrné statické momenty</th><th class="l">Plocha jádra</th></tr>
        <tr class="h2"><th>Tvar</th><th>[mm]</th><th>[mm]</th><th>[-]</th><th>y [mm]</th><th>z [mm]</th><th>y [mm]</th><th>z [mm]</th><th>r [mm]</th><th>S<sub>y</sub> [cm<sup>3</sup>]</th><th>S<sub>z</sub> [cm<sup>3</sup>]</th><th>A* [cm<sup>2</sup>]</th></tr>
        <tr class="row"><th class="rh">1</th><td>Oboustranné</td><td>85.0</td><td>5.0</td><td>17.00</td><td>-42.5</td><td>-47.5</td><td>42.5</td><td>-47.5</td><td></td><td>5.05</td><td>15.01</td><td class="area">90.25</td></tr>
        <tr class="row picked"><th class="rh">2</th><td>Oboustranné</td><td class="focus">7.8</td><td>5.0</td><td>1.57</td><td>42.5</td><td>-47.5</td><td>47.5</td><td>-42.5</td><td>5.0</td><td>11.07</td><td>11.07</td><td class="area">90.25</td></tr>
        <tr class="row"><th class="rh">3</th><td>Oboustranné</td><td>85.0</td><td>5.0</td><td>17.00</td><td>47.5</td><td>-42.5</td><td>47.5</td><td>42.5</td><td></td><td>15.01</td><td>5.05</td><td class="area">90.25</td></tr>
        <tr class="row"><th class="rh">4</th><td>Oboustranné</td><td>7.8</td><td>5.0</td><td>1.57</td><td>47.5</td><td>42.5</td><td>42.5</td><td>47.5</td><td>5.0</td><td>11.07</td><td>11.07</td><td class="area">90.25</td></tr>
        <tr class="row"><th class="rh">5</th><td>Oboustranné</td><td>85.0</td><td>5.0</td><td>17.00</td><td>42.5</td><td>47.5</td><td>-42.5</td><td>47.5</td><td></td><td>5.05</td><td>15.01</td><td class="area">90.25</td></tr>
        <tr class="row"><th class="rh">6</th><td>Oboustranné</td><td>7.8</td><td>5.0</td><td>1.57</td><td>-42.5</td><td>47.5</td><td>-47.5</td><td>42.5</td><td>5.0</td><td>11.07</td><td>11.07</td><td class="area">90.25</td></tr>
        <tr class="row"><th class="rh">7</th><td>Oboustranné</td><td>85.0</td><td>5.0</td><td>17.00</td><td>-47.5</td><td>42.5</td><td>-47.5</td><td>-42.5</td><td></td><td>15.01</td><td>5.05</td><td class="area">90.25</td></tr>
        <tr class="row"><th class="rh">8</th><td>Oboustranné</td><td>7.8</td><td>5.0</td><td>1.57</td><td>-47.5</td><td>-42.5</td><td>-42.5</td><td>-47.5</td><td>5.0</td><td>11.07</td><td>11.07</td><td class="area">90.25</td></tr>
        <tr class="fill"><th></th><td></td><td></td><td></td><td></td><td></td><td></td><td></td><td></td><td></td><td></td><td></td><td></td></tr>
      </table>
    </div>
    <div class="preview">
      <p>SHAPE-THIN HOHLPROFIL</p>
      <svg viewBox="0 17 232 265" preserveAspectRatio="xMinYMin slice">
        <path d="M-2 74.500H103C140 76 162 101 162.500 134V290H123.500V134C122 122 115 114.500 103 114.500H-2z" fill="url(#hatchWide)" stroke="#000"/>
        <path d="M0 95H103M142.500 134V290" stroke="#c8a060" stroke-width="2"/>
        <path d="M103.500 75v40M123 134.500h40" stroke="#000"/>
        <path d="M103 94.500C128 95 142 112 142.500 134" fill="none" stroke="#f00018" stroke-width="2"/>
        <path d="M101 92h4v4h-4zM140.500 132h4v4h-4zM138 113l3 7h-6z" fill="#f00018"/>
        <ellipse cx="133.500" cy="108" rx="60" ry="54.500" fill="none" stroke="#11d14b" stroke-width="5"/>
      </svg>
    </div>
  </div>
</section>
</body>
</html>
```

FILE: styles.css
```css
* { box-sizing: border-box; }
html, body { height: 100%; margin: 0; overflow: hidden; }
body { position: relative; font: 11px/16px "Open Sans", "Noto Sans", sans-serif; color: #000; background: #fff; }
h1, h2, h3, p, ul { margin: 0; padding: 0; font-size: 11px; font-weight: 400; }
a { color: inherit; text-decoration: none; }
button, select, input { font: inherit; color: inherit; margin: 0; padding: 0; border: 0; border-radius: 0; }
.paints { position: absolute; width: 0; height: 0; }
.symbols { display: none; }
.tiny { font: bold 7px "Liberation Serif", serif; fill: #222; }
.pale { fill: #888; }
.ax { font: 11px "Liberation Serif", serif; fill: #222; }

/* application window */
.app { height: 100%; display: flex; flex-direction: column; }
.apptitle { height: 23px; padding-top: 4px; color: #9b9b9b; font-size: 12px; position: relative; }
.apptitle span { display: block; margin-left: -3px; }
.progress { position: absolute; left: 549px; top: 0; width: 242px; height: 1px; background: linear-gradient(90deg, #2f7fd8 49px, #ccc 49px); }
.menubar { height: 24px; padding-left: 6px; background: #d0d4dd; color: #4a4a50; display: flex; align-items: center; gap: 15px; }
.menubar u { text-underline-offset: 2px; }
.toolrow { height: 26px; background: #d0d4dd; display: flex; }
.band { display: flex; align-items: center; height: 26px; padding-right: 1px; background: linear-gradient(#eef1f6, #dfe3eb); border-bottom: 1px solid #a8adb8; border-radius: 0 3px 0 0; }
.far { margin-left: 107px; }
.tb { width: 22px; height: 22px; border: 1px solid transparent; background: none; display: flex; align-items: center; justify-content: center; }
.tb svg, .ib svg { width: 18px; height: 18px; flex: none; display: block; }
.tb.on { border-color: #b9935a; background: linear-gradient(#fbc77c, #fee9b8); }
.sep { width: 8px; height: 14px; background: linear-gradient(#b7bcc7, #b7bcc7) center / 1px 100% no-repeat; }
.second .sep { width: 10px; }
.edge { width: 8px; height: 14px; border-left: 2px dotted #888; }
.grip { width: 11px; height: 13px; background: radial-gradient(#9298a6 1px, transparent 1px) 3px 0 / 4px 4px repeat-y; }
.dd { width: 12px; height: 22px; background: none; display: flex; align-items: center; justify-content: center; }
.dd::after { content: ""; border: 3px solid transparent; border-top-color: #666; border-bottom: 0; }
.loadcase { position: relative; width: 184px; height: 20px; margin: 0 3px 0 2px; background: #fff; }
.loadcase select { width: 100%; height: 20px; padding-left: 3px; appearance: none; background: linear-gradient(#dfe1e6, #dfe1e6) right 1px center / 14px 18px no-repeat #fff; }
.loadcase::after { content: ""; position: absolute; right: 5px; top: 9px; border: 3px solid transparent; border-top-color: #777; border-bottom: 0; }
.workspace { flex: 1; border-top: 2px solid #7c7d82; overflow: hidden; font-family: "Liberation Sans", Arial, sans-serif; }
.caption { height: 30px; padding-top: 5px; line-height: 14px; display: flex; flex-direction: column; margin-left: -7px; }
.model { display: block; width: 127px; height: 400px; overflow: visible; }
.load { font: bold 9px "DejaVu Sans", sans-serif; fill: #000090; }
.axl { font: 9px "DejaVu Sans", sans-serif; }
.dock { height: 80px; border-top: 1px solid #b5b8c0; background: #e6e9ef; display: flex; flex-direction: column; padding-top: 7px; }
.dock i { height: 19px; background: #b8bfca; }
.dock b { height: 26px; background: linear-gradient(#eef1f6, #cdd2dc); border-bottom: 1px solid #555; }
.dock em { height: 16px; margin-top: 2px; border: 1px solid #777; background: #e0e0e0; }

/* dialogs */
.win { position: absolute; background: #f0f0f0; border: 1px solid #646466; border-bottom: 0; display: flex; flex-direction: column; overflow: hidden; font-family: Roboto, "Open Sans", sans-serif; }
.main { left: 127px; right: 2px; top: 132px; bottom: 0; box-shadow: 0 0 18px rgba(0,0,0,.45); }
.child { left: 9px; width: 962px; top: 576px; bottom: 0; box-shadow: 0 0 12px rgba(0,0,0,.3); }
.titlebar { height: 25px; flex: none; background: #fff; display: flex; align-items: center; justify-content: space-between; padding: 0 8px 1px 3px; }
.titlebar h1 { font-size: 12px; }
.x { background: none; width: 13px; height: 13px; }
.x svg { width: 11px; height: 11px; display: block; }
.winmenu { height: 19px; flex: none; padding: 1px 7px 0; background: #fff; display: flex; gap: 14px; line-height: 18px; font-size: 12px; }
.panes { flex: 1; min-height: 0; margin: 3px 3px 0 1px; border: solid #a0a0a0; border-width: 2px 1px 1px 0; display: flex; }
.side { width: 176px; flex: none; border-left: 1px solid #a0a0a0; border-right: 1px solid #a0a0a0; display: flex; flex-direction: column; padding-top: 1px; }
.pick { position: relative; display: block; }
.pick select { width: 100%; height: 100%; appearance: none; background: #e1e1e1; border: 1px solid #adadad; padding-left: 3px; }
.pick::after { content: ""; position: absolute; right: 6px; top: 6px; width: 6px; height: 6px; border: solid #444; border-width: 0 1px 1px 0; transform: rotate(45deg); }
.case { height: 21px; margin-bottom: 2px; }
.case select { padding-left: 2px; }
.tree { flex: 1; margin-right: 1px; background: #fcfcf4; border-top: 1px solid #a0a0a0; overflow: hidden; white-space: nowrap; padding: 1px 0 0 5px; }
.tree ul { list-style: none; margin-left: 8px; }
.tree li { position: relative; padding-left: 10px; height: 16px; }
.tree li::before { content: ""; position: absolute; left: 0; top: 0; width: 9px; height: 8px; border: dotted #909090; border-width: 0 0 1px 1px; }
.tree li:not(:last-child)::after { content: ""; position: absolute; left: 0; top: 8px; height: 8px; border-left: 1px dotted #909090; }
.tree span { display: block; padding-left: 1px; height: 16px; }
.cur span { background: #f0f0f0; }
.content { flex: 1; min-width: 0; padding: 1px 2px 9px 3px; display: flex; flex-direction: column; }
.content h2 { height: 19px; padding-left: 2px; line-height: 19px; background: #bfccda; font-size: 12px; }
.results { height: 239px; margin: 10px 5px 10px 8px; border-right: 1px solid #a9a6e8; border-bottom: 1px solid #a9a6e8; display: flex; flex-direction: column; flex: none; }
.lower { flex: 1; min-height: 0; margin: 0 5px 0 8px; display: flex; gap: 8px; }

/* grids */
.grid { flex: 1; width: 100%; height: 208px; table-layout: fixed; border-collapse: separate; border-spacing: 0; border-top: 1px solid #a0a0a0; border-left: 1px solid #a0a0a0; line-height: 14px; }
.grid th, .grid td { padding: 0 4px; font-weight: 400; border-right: 1px solid #a0a0a0; border-bottom: 1px solid #a0a0a0; white-space: nowrap; overflow: hidden; }
.grid .letters { height: 14px; }
.grid .letters th { line-height: 12px; background: #e1e1e1; border-right-color: #777; border-bottom-color: #666; box-shadow: inset 1px 1px #fff, inset -1px -1px #b0b0b0; }
.grid .letters .corner { line-height: 13px; padding: 12px 0 0; box-shadow: none; border-color: #a0a0a0; border-bottom-color: #666; }
.grid .letters .one { padding-top: 22px; }
.grid .sel, .grid .letters .sel { background: #0078d7; color: #fff; }
.grid .h1 { height: 17px; }
.grid .h1 th { border-bottom: 0; padding: 0 0 3px; line-height: 13px; }
.grid .h2 { height: 16px; }
.grid .h2 th { padding: 0 0 2px; line-height: 13px; }
.grid .h1 .l { text-align: left; }
.grid .h1 .long { font-size: 10px; }
.grid .group, .grid .row { height: 16px; }
.grid .group td { background: #e1e1e1; border-right: 0; }
.grid .rh { padding: 0; background: #e1e1e1; box-shadow: inset 1px 1px #fff, inset -1px -1px #a0a0a0; border-right-color: #666; border-bottom-color: #777; }
.grid .rh.sel { background: #0078d7; }
.cream td { background: #fffaf0; }
.grid .red { color: #f00020; }
.grid .tight { padding: 0 3px 0 0; }
.grid .c { text-align: center; }
.grid .r { text-align: right; }
.focus { outline: 1px dotted #000; outline-offset: -1px; }
.fill th { background: #e1e1e1; }
.fill td { background: #e8eeee; }
.grid .fill th, .grid .fill td { border-bottom: 0; }
.w24 { width: 24px; } .w36 { width: 36px; } .w46 { width: 45px; } .w48 { width: 48px; } .w54 { width: 54px; } .w60 { width: 60px; }
.w66 { width: 66px; } .w72 { width: 72px; } .w84 { width: 84px; } .w150 { width: 150px; }

/* result bar */
.resbar { height: 30px; flex: none; background: #f0f4fa; display: flex; align-items: center; padding: 2px 2px 0 275px; }
.resbar input { height: 17px; background: transparent; border: 1px solid #fff; border-top-color: #a0a0a0; border-left-color: #a0a0a0; }
.maxv { width: 85px; margin-left: 4px; }
.maxn { width: 22px; padding-left: 4px; }
.sad { width: 14px; height: 14px; margin-left: 3px; }
.btns { display: flex; gap: 2px; }
.mid { margin-left: 52px; }
.end { margin-left: auto; }
.ib { width: 25px; height: 21px; border: 1px solid #adadad; background: #e1e1e1; display: flex; align-items: center; justify-content: center; }
.ib svg { width: 17px; height: 17px; }
.ib .small { width: 14px; height: 14px; }
.ib.off { background: #cccccc; border-color: #bfbfbf; }
.ib.act { background: #cce4f7; border-color: #005499; }
.lim { width: 74px; height: 21px; margin: 0 3px 0 2px; }

/* details */
.details { flex: 1; min-width: 0; border-right: 1px solid #a9a6e8; border-bottom: 1px solid #a9a6e8; font-family: "Liberation Sans", Arial, sans-serif; overflow: hidden; padding-right: 1px; }
.details h3 { height: 15px; padding-left: 2px; background: #dce5f4; color: #1f4468; clip-path: polygon(0 0, calc(100% - 9px) 0, 100% 10px, 100% 100%, 0 100%); }
.dt { width: 100%; table-layout: fixed; border-collapse: separate; border-spacing: 0; border-top: 1px solid #a0a0a0; border-left: 1px solid #a0a0a0; line-height: 14px; }
.dt tr { height: 16px; }
.dt td { background: #fff; padding: 0 3px; border-right: 1px solid #a0a0a0; border-bottom: 1px solid #a0a0a0; white-space: nowrap; }
.dt .grey td { background: #e9e9e9; }
.dt .r { text-align: right; }
.dt .leaf { padding-left: 26px; background: linear-gradient(#ccc, #ccc) 7px 7px / 11px 1px no-repeat, linear-gradient(#ccc, #ccc) 7px 0 / 1px 7px no-repeat #fff; }
.pm { width: 9px; height: 9px; margin-right: 3px; border: 1px solid #000; vertical-align: -1px; background: linear-gradient(#000, #000) center / 5px 1px no-repeat #fff; }
.pm.plus { background: linear-gradient(#000, #000) center / 5px 1px no-repeat, linear-gradient(#000, #000) center / 1px 5px no-repeat #fff; }

/* cross-section */
.section { width: 210px; flex: none; border-top: 1px solid #808080; border-left: 1px solid #808080; border-right: 1px solid #a9a6e8; border-bottom: 1px solid #a9a6e8; display: flex; flex-direction: column; }
.sketch { flex: 1; min-height: 0; display: flex; flex-direction: column; background: linear-gradient(60deg, #fff 10%, #fffdf3 55%, #faf5e2); font-family: "Liberation Sans", Arial, sans-serif; }
.sketch p { padding-left: 4px; height: 16px; flex: none; }
.sketch svg { flex: 1; min-height: 0; display: block; }
.sketch .unit { text-align: right; padding-right: 6px; height: 18px; }
.dim { font: 10px "Liberation Sans", Arial, sans-serif; }
.yz { font: 11px "Liberation Mono", monospace; fill: #f0f; }
.secbar { height: 28px; flex: none; background: #f0f4fa; display: flex; align-items: flex-start; gap: 5px; padding: 3px; }
.secbar .first { margin-left: auto; }

/* actions */
.actions { height: 40px; flex: none; margin-bottom: 8px; border-bottom: 1px solid #a0a0a0; display: flex; justify-content: flex-end; align-items: center; gap: 9px; padding: 3px 10px 0 0; }
.btn { width: 73px; height: 21px; background: #e1e1e1; border: 1px solid #adadad; }
.btn.ok { border: 2px solid #0078d7; }

/* child dialog */
.childbody { flex: 1; min-height: 0; padding: 8px 7px 0 8px; display: flex; gap: 7px; }
.clip { flex: 1; min-width: 0; overflow: hidden; border-right: 1px solid #fff; display: flex; }
.parts { flex: none; width: 724px; height: 100%; }
.parts .row td { text-align: right; padding: 0 3px; background: #f0f0f0; }
.parts .row td:nth-child(2), .parts .row .area { text-align: left; }
.parts .row .area { padding-left: 28px; }
.parts sub, .parts sup { font-size: 9px; line-height: 0; }
.parts .row.picked td, .parts .picked .rh { background: #0078d7; color: #fff; box-shadow: none; }
.parts .row.picked .focus { color: #5f6b80; outline-color: #401060; }
.preview { width: 234px; flex: none; border-top: 1px solid #808080; border-left: 1px solid #808080; border-right: 1px solid #a9a6e8; background: linear-gradient(60deg, #fff 10%, #fffdf3 55%, #faf5e2); display: flex; flex-direction: column; overflow: hidden; font-family: "Liberation Sans", Arial, sans-serif; }
.preview p { height: 16px; flex: none; padding-left: 4px; }
.preview svg { display: block; width: 232px; height: 265px; flex: none; }
```
